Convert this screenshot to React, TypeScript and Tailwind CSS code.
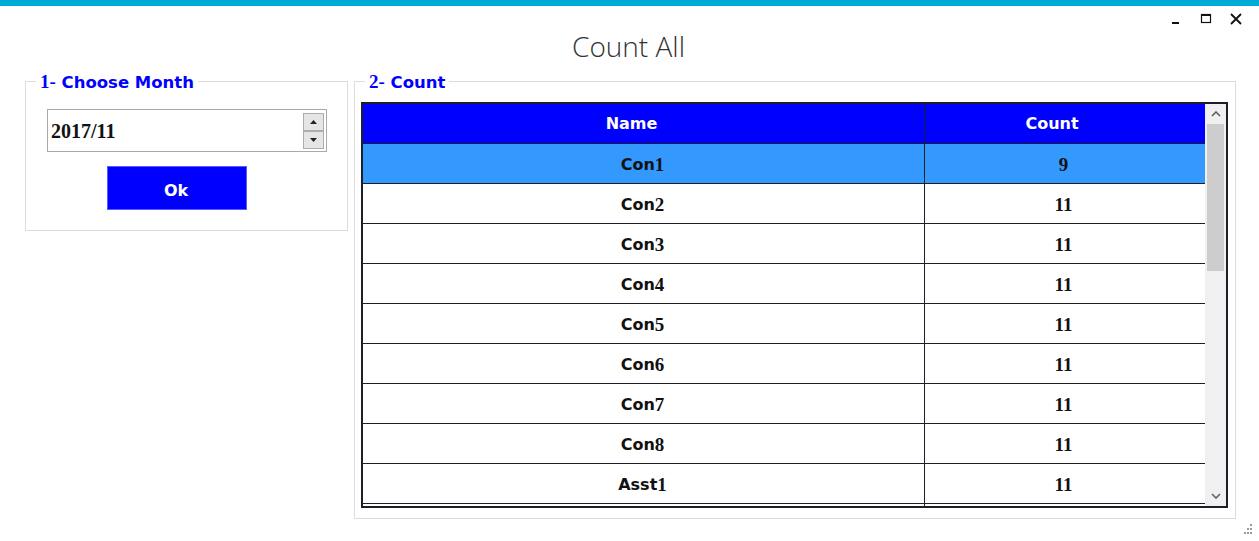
import React from 'react';

const sans = { fontFamily: '"DejaVu Sans", Verdana, sans-serif' };
const serif = { fontFamily: '"Liberation Serif", "Times New Roman", serif' };

// digits show up in a serif face in the original app, letters in a bold sans
const Mixed: React.FC<{ text: string }> = ({ text }) => {
  const parts = text.match(/[0-9\-/]+|[^0-9\-/]+/g) || [];
  return (
    <>
      {parts.map((p, i) =>
        /[0-9\-/]/.test(p[0]) ? (
          <span key={i} style={serif} className="text-[19px]">
            {p}
          </span>
        ) : (
          <span key={i}>{p}</span>
        )
      )}
    </>
  );
};

const rows = [
  { name: 'Con1', count: 9 },
  { name: 'Con2', count: 11 },
  { name: 'Con3', count: 11 },
  { name: 'Con4', count: 11 },
  { name: 'Con5', count: 11 },
  { name: 'Con6', count: 11 },
  { name: 'Con7', count: 11 },
  { name: 'Con8', count: 11 },
  { name: 'Asst1', count: 11 },
];

const Legend: React.FC<{ text: string }> = ({ text }) => (
  <span
    style={sans}
    className="absolute -top-[10px] left-[10px] bg-white px-[4px] text-[16.5px] font-bold leading-[20px] text-[#0000ff]"
  >
    <Mixed text={text} />
  </span>
);

const WindowControls = () => (
  <div className="absolute right-[17px] top-[12px] flex items-center gap-[18px]">
    <svg width="12" height="14" viewBox="0 0 12 14">
      <rect x="2" y="10" width="7" height="2" fill="#111" />
    </svg>
    <svg width="12" height="14" viewBox="0 0 12 14">
      <rect x="1.5" y="2.5" width="9" height="8" fill="none" stroke="#111" strokeWidth="1.2" />
      <rect x="1.5" y="2" width="9" height="2" fill="#111" />
    </svg>
    <svg width="12" height="14" viewBox="0 0 12 14">
      <path d="M1 2 L11 12 M11 2 L1 12" stroke="#111" strokeWidth="1.8" />
    </svg>
  </div>
);

const SpinButton: React.FC<{ up?: boolean }> = ({ up }) => (
  <div className="flex h-[18px] w-[21px] items-center justify-center border border-[#adadad] bg-[#e5e5e5]">
    <svg width="7" height="4" viewBox="0 0 7 4">
      {up ? <path d="M0 4 L3.5 0 L7 4 Z" fill="#222" /> : <path d="M0 0 L3.5 4 L7 0 Z" fill="#222" />}
    </svg>
  </div>
);

const Scrollbar = () => (
  <div className="flex w-[21px] flex-col bg-[#f0f0f0]">
    <div className="flex h-[20px] items-center justify-center">
      <svg width="10" height="6" viewBox="0 0 10 6">
        <path d="M1 5 L5 1 L9 5" fill="none" stroke="#606060" strokeWidth="1.6" />
      </svg>
    </div>
    <div className="mx-[2px] h-[147px] bg-[#cdcdcd]" />
    <div className="flex-1" />
    <div className="flex h-[20px] items-center justify-center">
      <svg width="10" height="6" viewBox="0 0 10 6">
        <path d="M1 1 L5 5 L9 1" fill="none" stroke="#606060" strokeWidth="1.6" />
      </svg>
    </div>
  </div>
);

const Grip = () => (
  <svg width="12" height="12" viewBox="0 0 12 12" className="absolute bottom-[6px] right-[6px]">
    {[
      [9, 1],
      [6, 5],
      [9, 5],
      [3, 9],
      [6, 9],
      [9, 9],
    ].map(([x, y], i) => (
      <rect key={i} x={x} y={y} width="2" height="2" fill="#9a9a9a" />
    ))}
  </svg>
);

export default function App() {
  return (
    <div className="relative h-[541px] w-[1259px] overflow-hidden bg-white">
      <div className="h-[6px] bg-[#00aad9]" />
      <WindowControls />

      <div
        className="flex h-[75px] justify-center pt-[22px] pr-[2px] text-[28px] font-light leading-[36px] text-[#333]"
        style={{ fontFamily: '"Open Sans", "Noto Sans", sans-serif' }}
      >
        Count All
      </div>

      <div className="flex items-start gap-[6px] pl-[25px]">
        {/* 1- Choose Month */}
        <div className="relative h-[150px] w-[323px] border border-[#dcdcdc]">
          <Legend text="1- Choose Month" />
          <div className="ml-[21px] mt-[27px] flex h-[43px] w-[280px] items-center justify-between border border-[#a9a9a9] pl-[3px] pr-[2px]">
            <span style={serif} className="text-[20px] font-bold text-[#111]">
              2017/11
            </span>
            <div className="flex flex-col">
              <SpinButton up />
              <SpinButton />
            </div>
          </div>
          <button
            style={sans}
            className="ml-[81px] mt-[14px] flex h-[44px] w-[140px] items-center justify-center border border-[#5a5aff] bg-[#0000ff] pt-[5px] pr-[2px] text-[16px] font-bold text-white"
          >
            Ok
          </button>
        </div>

        {/* 2- Count */}
        <div className="relative h-[438px] w-[882px] border border-[#dcdcdc]">
          <Legend text="2- Count" />
          <div className="ml-[6px] mt-[20px] flex h-[406px] w-[867px] border-2 border-[#1e1e28]">
            <div style={sans} className="flex-1 overflow-hidden text-[16px] font-bold">
              <div className="grid h-[40px] grid-cols-[562px_1fr] border-b border-[#1e1e28] bg-[#0000ff] text-white">
                <div className="flex items-center justify-center border-r border-[#1e1e28] pt-[1px] pr-[24px]">Name</div>
                <div className="flex items-center justify-center pt-[1px] pr-[26px]">Count</div>
              </div>
              {rows.map((r, i) => (
                <div
                  key={r.name}
                  className={`grid h-[40px] grid-cols-[562px_1fr] border-b border-[#1e1e28] text-[#111] ${
                    i === 0 ? 'bg-[#3399ff]' : 'bg-white'
                  }`}
                >
                  <div className="flex items-center justify-center border-r border-[#1e1e28] pt-[3px] pr-[2px]">
                    <Mixed text={r.name} />
                  </div>
                  <div style={serif} className="flex items-center justify-center pt-[3px] pr-[3px] text-[19px]">
                    {r.count}
                  </div>
                </div>
              ))}
              <div className="grid h-[2px] grid-cols-[562px_1fr]">
                <div className="border-r border-[#1e1e28]" />
                <div />
              </div>
            </div>
            <Scrollbar />
          </div>
        </div>
      </div>

      <Grip />
    </div>
  );
}
